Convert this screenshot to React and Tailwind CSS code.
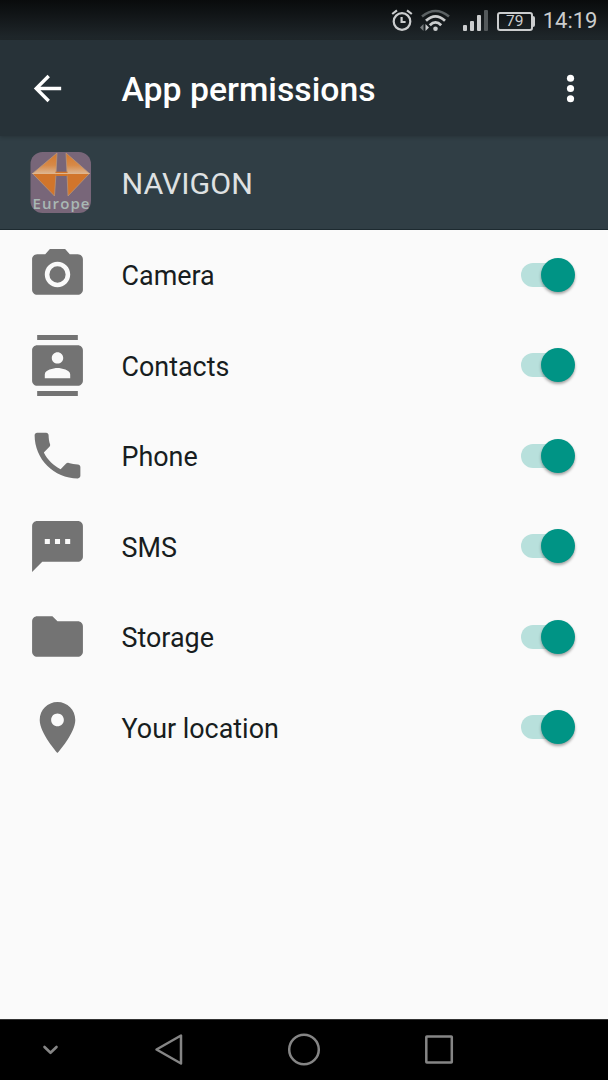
const PERMISSIONS = [
  {
    name: 'Camera',
    path: 'M9 2 7.17 4H4c-1.1 0-2 .9-2 2v12c0 1.1.9 2 2 2h16c1.1 0 2-.9 2-2V6c0-1.1-.9-2-2-2h-3.17L15 2H9zm3 15c-2.76 0-5-2.24-5-5s2.24-5 5-5 5 2.24 5 5-2.24 5-5 5zM12 8.8a3.2 3.2 0 1 0 0 6.4 3.2 3.2 0 0 0 0-6.4z',
  },
  {
    name: 'Contacts',
    path: 'M20 0H4v2h16V0zM4 24h16v-2H4v2zM20 4H4c-1.1 0-2 .9-2 2v12c0 1.1.9 2 2 2h16c1.1 0 2-.9 2-2V6c0-1.1-.9-2-2-2zm-8 2.75c1.24 0 2.25 1.01 2.25 2.25s-1.01 2.25-2.25 2.25S9.75 10.24 9.75 9 10.76 6.75 12 6.75zM17 17H7v-1.5c0-1.67 3.33-2.5 5-2.5s5 .83 5 2.5V17z',
  },
  {
    name: 'Phone',
    path: 'M6.62 10.79c1.44 2.83 3.76 5.14 6.59 6.59l2.2-2.2c.27-.27.67-.36 1.02-.24 1.12.37 2.33.57 3.57.57.55 0 1 .45 1 1V20c0 .55-.45 1-1 1-9.39 0-17-7.61-17-17 0-.55.45-1 1-1h3.5c.55 0 1 .45 1 1 0 1.25.2 2.45.57 3.57.11.35.03.74-.25 1.02l-2.2 2.2z',
  },
  {
    name: 'SMS',
    path: 'M20 2H4c-1.1 0-1.99.9-1.99 2L2 22l4-4h14c1.1 0 2-.9 2-2V4c0-1.1-.9-2-2-2zM9 11H7V9h2v2zm4 0h-2V9h2v2zm4 0h-2V9h2v2z',
  },
  {
    name: 'Storage',
    path: 'M10 4H4c-1.1 0-1.99.9-1.99 2L2 18c0 1.1.9 2 2 2h16c1.1 0 2-.9 2-2V8c0-1.1-.9-2-2-2h-8l-2-2z',
  },
  {
    name: 'Your location',
    path: 'M12 2C8.13 2 5 5.13 5 9c0 5.25 7 13 7 13s7-7.75 7-13c0-3.87-3.13-7-7-7zm0 9.5c-1.38 0-2.5-1.12-2.5-2.5s1.12-2.5 2.5-2.5 2.5 1.12 2.5 2.5-1.12 2.5-2.5 2.5z',
  },
];

export default function App() {
  return (
    <div
      className="flex flex-col w-[608px] h-[1080px] overflow-hidden bg-[#fafafa]"
      style={{ fontFamily: 'Roboto, "Noto Sans", sans-serif' }}
    >
      <StatusBar />
      <Toolbar />
      <AppHeader />
      <ul className="flex-1">
        {PERMISSIONS.map((p) => (
          <PermissionRow key={p.name} name={p.name} path={p.path} />
        ))}
      </ul>
      <NavBar />
    </div>
  );
}

function StatusBar() {
  return (
    <div className="flex items-center justify-end h-10 shrink-0 pr-[10.5px] bg-linear-to-b from-[#090b0c] to-[#20282c] text-[#cbcdce]">
      {/* Alarm */}
      <svg width="22" height="24" viewBox="0 0 22 24" fill="none" stroke="currentColor" strokeWidth="2.2" className="mr-[7px]">
        <circle cx="11" cy="13.5" r="8.3" />
        <path d="M10.6 9v5h4M1.2 6 6 2.3M20.8 6 16 2.3" />
      </svg>
      {/* Wi-Fi with traffic arrows */}
      <svg width="30" height="24" viewBox="0 0 30 24" fill="none" className="mr-[13px]">
        <path d="M2 8.5Q15.5-2.5 29 8.5" stroke="#5b6163" strokeWidth="2.6" />
        <path d="M6 12.8Q15.5 4 25 12.8M9.8 17.3Q15.5 11.5 21.2 17.3" stroke="currentColor" strokeWidth="2.8" />
        <circle cx="15.5" cy="20.8" r="2.3" fill="currentColor" />
        <path d="M3.5 16v7L0 19.5z" fill="#777c7e" />
        <path d="M5.5 16v7L9 19.5z" fill="currentColor" />
      </svg>
      {/* Signal */}
      <div className="flex items-end gap-[3px] h-[22px] mr-[9px]">
        <span className="w-[4px] h-[6px] rounded-[1px] bg-[#cbcdce]" />
        <span className="w-[4px] h-[10px] rounded-[1px] bg-[#cbcdce]" />
        <span className="w-[4px] h-[16px] rounded-[1px] bg-[#cbcdce]" />
        <span className="w-[4px] h-[21px] rounded-[1px] bg-[#54595b]" />
      </div>
      {/* Battery */}
      <div className="flex items-center mt-[2px] mr-[8px]">
        <div className="flex items-center justify-center w-[36px] h-[19px] pt-[2px] rounded-[3px] border-2 border-[#cbcdce] text-[15.5px] leading-none">
          79
        </div>
        <span className="w-[2px] h-[11px] rounded-r-xs bg-[#cbcdce]" />
      </div>
      <span className="mt-[2px] text-[22px] leading-none">14:19</span>
    </div>
  );
}

function Toolbar() {
  return (
    <header className="relative z-10 flex items-center h-[96px] shrink-0 pl-[27px] pr-[17px] bg-[#273238] text-white shadow-[0_1px_4px_rgba(0,0,0,0.2)]">
      <svg width="41" height="41" viewBox="0 0 24 24" fill="currentColor">
        <path d="M20 11H7.83l5.59-5.59L12 4l-8 8 8 8 1.41-1.41L7.83 13H20v-2z" />
      </svg>
      <h1 className="flex-1 pl-[53.5px] pt-[3px] text-[33.75px] leading-none font-medium">App permissions</h1>
      <svg width="41" height="41" viewBox="0 0 24 24" fill="currentColor">
        <circle cx="12" cy="6" r="2.1" />
        <circle cx="12" cy="12" r="2.1" />
        <circle cx="12" cy="18" r="2.1" />
      </svg>
    </header>
  );
}

function AppHeader() {
  return (
    <div className="flex items-center h-[93.5px] shrink-0 pl-[30px] border-b border-[#1d2a30] bg-[#303e45]">
      <svg width="61" height="61" viewBox="0 0 61 61" className="overflow-visible">
        <defs>
          <linearGradient id="wing" x1="0" y1="0" x2="0" y2="1">
            <stop offset="0" stopColor="#d2772c" />
            <stop offset="0.6" stopColor="#d78a48" />
            <stop offset="1" stopColor="#dcb48f" />
          </linearGradient>
        </defs>
        <rect x="0.5" width="60.5" height="61" rx="12" fill="#786679" />
        <g stroke="#b99a80" strokeWidth="0.7">
          <path d="M27 1 26 21.5H2.5z" fill="url(#wing)" />
          <path d="M36 1 37 21.5h22.5z" fill="url(#wing)" />
          <path d="M2.5 21.5H26L24.5 44z" fill="#d1752b" />
          <path d="M59.5 21.5H37L38 44z" fill="#d1752b" />
        </g>
        <path d="M25.5 19.7h12v4.3h-12z" fill="#d1752b" />
        <path d="M2.5 21.5h57" stroke="#dfb58d" strokeWidth="1.2" />
        <text
          x="2.5"
          y="57.3"
          textLength="57"
          fontFamily="'Open Sans', sans-serif"
          fontSize="15"
          fontWeight="600"
          fill="#a8b8b4"
        >
          Europe
        </text>
      </svg>
      <span className="pl-[30.5px] pt-[4px] text-[30.4px] leading-none text-[#dfe1e2]">NAVIGON</span>
    </div>
  );
}

function PermissionRow({ name, path }) {
  return (
    <li className="flex items-center h-[90.5px] pl-[27px] pr-[33px]">
      <svg width="61" height="61" viewBox="0 0 24 24" fill="#737373">
        <path d={path} />
      </svg>
      <span className="flex-1 pl-[33.5px] pt-[4px] text-[26.9px] leading-none text-[#171d20]">{name}</span>
      <Switch />
    </li>
  );
}

function Switch() {
  return (
    <div className="flex items-center" role="switch" aria-checked="true">
      <span className="w-[40px] h-6 rounded-full bg-[#b8e0dc]" />
      <span className="-ml-5 size-[34px] rounded-full bg-[#009485] shadow-[0_2px_3px_rgba(0,0,0,0.35)]" />
    </div>
  );
}

function NavBar() {
  return (
    <nav className="flex items-center h-[61px] shrink-0 border-t border-[#333333] bg-black">
      <svg width="608" height="60" viewBox="0 0 608 60" fill="none" stroke="#858585" strokeWidth="2.5" strokeLinejoin="round" strokeLinecap="round">
        <path d="m44.5 27 6 5.8 6-5.8" strokeWidth="2.6" />
        <path d="M181 15.500v28L156.500 29.500z" />
        <circle cx="304" cy="29.5" r="14.8" />
        <rect x="426.3" y="16.5" width="25.5" height="26" rx="0.5" />
      </svg>
    </nav>
  );
}
